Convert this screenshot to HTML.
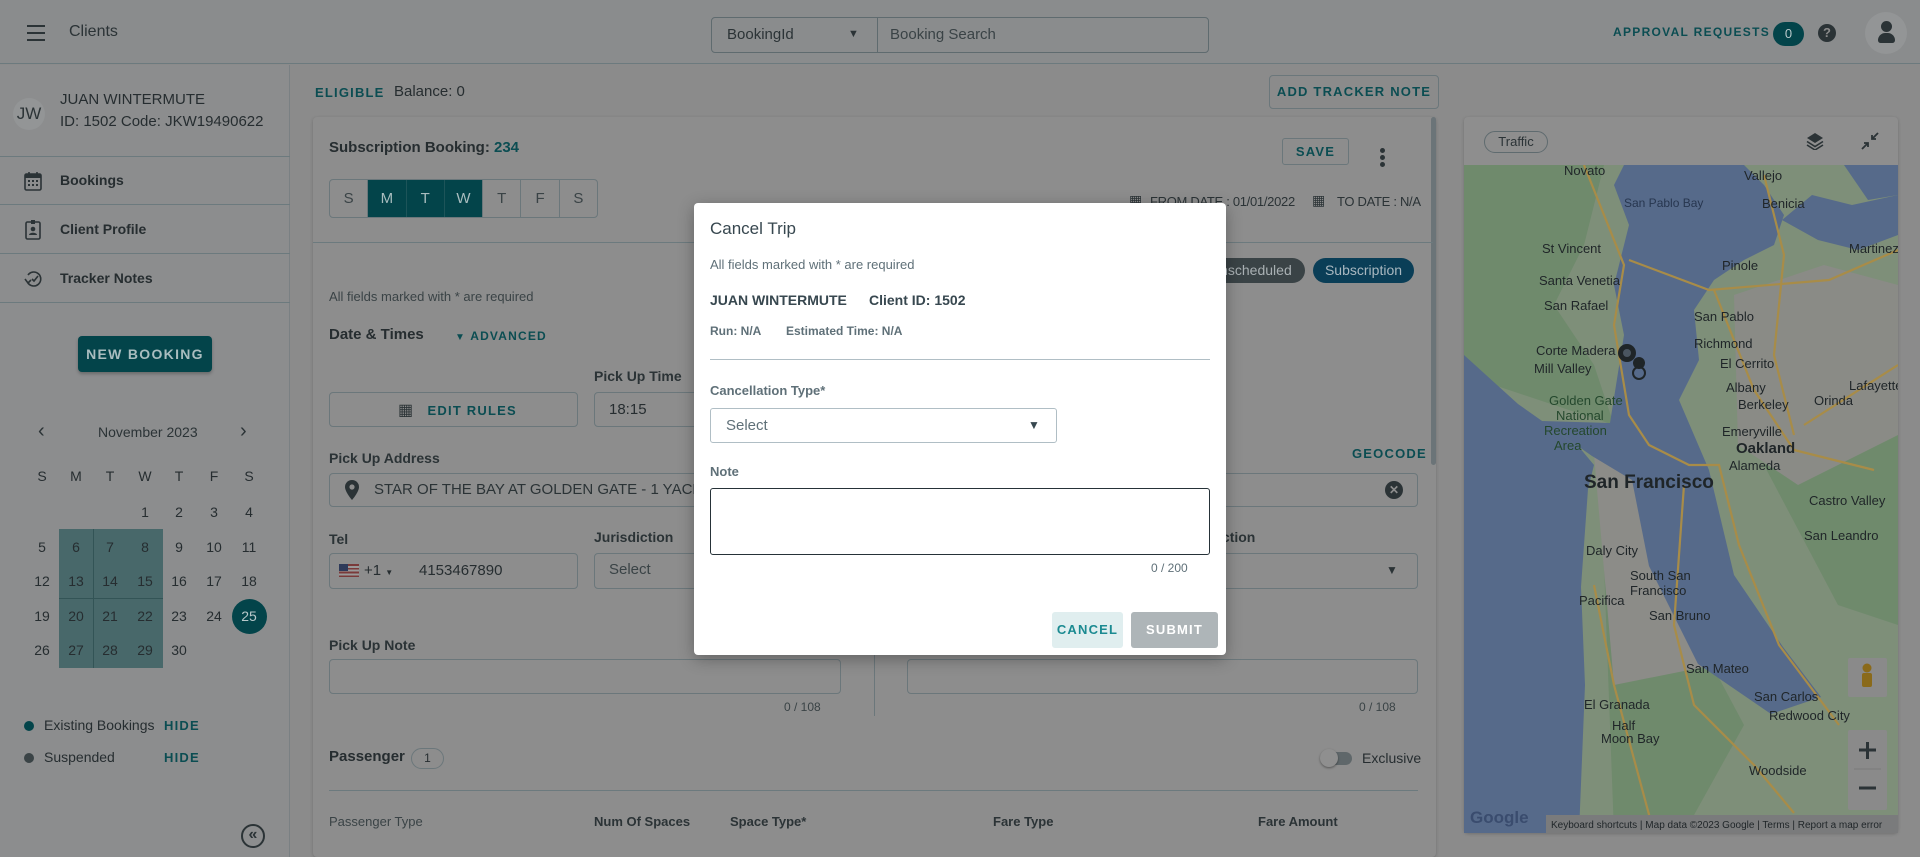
<!DOCTYPE html>
<html><head><meta charset="utf-8"><style>
*{box-sizing:border-box;margin:0;padding:0}
body{width:1920px;height:857px;overflow:hidden;background:#8b8b8b;font-family:"Liberation Sans",sans-serif;color:#262d30;position:relative;font-size:14px}
.a{position:absolute;white-space:nowrap}
.teal{color:#0b4d52;font-weight:bold;letter-spacing:1.2px}
.inp{position:absolute;border:1px solid #6b777b;border-radius:4px}
.lbl{position:absolute;font-weight:bold;color:#2b3336;font-size:14px}
.hl{position:absolute;height:1px;background:#6c7a7e}
.cal span{position:absolute;width:30px;text-align:center;font-size:14px;color:#262d30}
</style></head><body>
<!-- header -->
<div class="a" style="left:0;top:0;width:1920px;height:64px;background:#8a8c8d;border-bottom:1px solid #6c7a7e"></div>
<div class="a" style="left:27px;top:25px;width:18px;height:2px;background:#2b3336;box-shadow:0 7px 0 #2b3336,0 14px 0 #2b3336"></div>
<div class="a" style="left:69px;top:23px;font-size:16px;color:#2b3336">Clients</div>
<div class="inp" style="left:711px;top:17px;width:498px;height:36px;border-color:#5f6b6f"></div>
<div class="a" style="left:877px;top:17px;width:1px;height:36px;background:#5f6b6f"></div>
<div class="a" style="left:727px;top:26px;font-size:15px;color:#2b3336">BookingId</div>
<div class="a" style="left:848px;top:28px;font-size:11px;color:#2b3336">▼</div>
<div class="a" style="left:890px;top:26px;font-size:15px;color:#3a4346">Booking Search</div>
<div class="a teal" style="left:1613px;top:25px;font-size:12px;letter-spacing:1.3px">APPROVAL REQUESTS</div>
<div class="a" style="left:1773px;top:22px;width:31px;height:24px;border-radius:12px;background:#03444a;color:#b8c8ca;font-size:13px;text-align:center;line-height:24px">0</div>
<div class="a" style="left:1818px;top:24px;width:18px;height:18px;border-radius:50%;background:#2b3336;color:#8b8b8b;font-size:13px;font-weight:bold;text-align:center;line-height:18px">?</div>
<div class="a" style="left:1865px;top:12px;width:42px;height:42px;border-radius:50%;background:#939596"></div>
<div class="a" style="left:1881px;top:21px;width:11px;height:11px;border-radius:50%;background:#2b3336"></div>
<div class="a" style="left:1878px;top:33px;width:17px;height:10px;border-radius:8px 8px 3px 3px;background:#2b3336"></div>
<!-- sidebar -->
<div class="a" style="left:0;top:65px;width:290px;height:792px;background:#8c8d8e;border-right:1px solid #7a8083"></div>
<div class="a" style="left:13px;top:98px;width:32px;height:32px;border-radius:50%;background:#939596;font-size:17px;line-height:32px;text-align:center;color:#2b3336">JW</div>
<div class="a" style="left:60px;top:91px;font-size:15px">JUAN WINTERMUTE</div>
<div class="a" style="left:60px;top:113px;font-size:15px">ID: 1502 Code: JKW19490622</div>
<div class="hl" style="left:0;top:156px;width:290px"></div>
<div class="hl" style="left:0;top:204px;width:290px"></div>
<div class="hl" style="left:0;top:253px;width:290px"></div>
<div class="hl" style="left:0;top:302px;width:290px"></div>
<svg class="a" style="left:24px;top:171px" width="18" height="20" viewBox="0 0 18 20"><rect x="1" y="3" width="16" height="16" rx="1.5" fill="none" stroke="#2b3336" stroke-width="1.6"/><rect x="1" y="3" width="16" height="4" fill="#2b3336"/><path d="M5 1v4M13 1v4" stroke="#2b3336" stroke-width="1.6"/><g fill="#2b3336"><rect x="4" y="9" width="2" height="2"/><rect x="8" y="9" width="2" height="2"/><rect x="12" y="9" width="2" height="2"/><rect x="4" y="13" width="2" height="2"/><rect x="8" y="13" width="2" height="2"/><rect x="12" y="13" width="2" height="2"/></g></svg>
<div class="a" style="left:60px;top:172px;font-size:14px;font-weight:bold">Bookings</div>
<svg class="a" style="left:25px;top:219px" width="16" height="21" viewBox="0 0 16 21"><rect x="1" y="3" width="14" height="17" rx="1.5" fill="none" stroke="#2b3336" stroke-width="1.6"/><rect x="6" y="1" width="4" height="4" fill="#2b3336"/><circle cx="8" cy="10" r="2.3" fill="#2b3336"/><path d="M4 16c0-3 8-3 8 0" fill="#2b3336"/></svg>
<div class="a" style="left:60px;top:221px;font-size:14px;font-weight:bold">Client Profile</div>
<svg class="a" style="left:24px;top:269px" width="20" height="20" viewBox="0 0 20 20"><path d="M4 14A7 7 0 1 0 4 6" fill="none" stroke="#2b3336" stroke-width="1.6"/><path d="M1 10l3 4 3-3" fill="none" stroke="#2b3336" stroke-width="1.6"/><path d="M8 10l2 2 4-5" fill="none" stroke="#2b3336" stroke-width="1.6"/></svg>
<div class="a" style="left:60px;top:270px;font-size:14px;font-weight:bold">Tracker Notes</div>
<div class="a" style="left:78px;top:336px;width:134px;height:36px;border-radius:4px;background:#03444a;color:#a9bdbf;font-weight:bold;font-size:14px;letter-spacing:1.3px;text-align:center;line-height:36px;box-shadow:0 2px 3px rgba(0,0,0,.25)">NEW BOOKING</div>
<div class="a" style="left:38px;top:420px;font-size:20px;color:#2b3336">‹</div>
<div class="a" style="left:240px;top:420px;font-size:20px;color:#2b3336">›</div>
<div class="a" style="left:98px;top:424px;font-size:14px;color:#2b3336">November 2023</div>
<div class="a" style="left:59px;top:529px;width:104px;height:139px;background:#48686a"></div>
<div class="a" style="left:93px;top:529px;width:1px;height:139px;background:#335456"></div>
<div class="a" style="left:59px;top:598px;width:104px;height:1px;background:#335456"></div>
<div class="a" style="left:232px;top:599px;width:35px;height:35px;border-radius:50%;background:#03444a"></div>
<div class="cal">
<span style="left:27px;top:468px">S</span><span style="left:61px;top:468px">M</span><span style="left:95px;top:468px">T</span><span style="left:130px;top:468px">W</span><span style="left:164px;top:468px">T</span><span style="left:199px;top:468px">F</span><span style="left:234px;top:468px">S</span>
<span style="left:130px;top:504px">1</span><span style="left:164px;top:504px">2</span><span style="left:199px;top:504px">3</span><span style="left:234px;top:504px">4</span>
<span style="left:27px;top:539px">5</span><span style="left:61px;top:539px">6</span><span style="left:95px;top:539px">7</span><span style="left:130px;top:539px">8</span><span style="left:164px;top:539px">9</span><span style="left:199px;top:539px">10</span><span style="left:234px;top:539px">11</span>
<span style="left:27px;top:573px">12</span><span style="left:61px;top:573px">13</span><span style="left:95px;top:573px">14</span><span style="left:130px;top:573px">15</span><span style="left:164px;top:573px">16</span><span style="left:199px;top:573px">17</span><span style="left:234px;top:573px">18</span>
<span style="left:27px;top:608px">19</span><span style="left:61px;top:608px">20</span><span style="left:95px;top:608px">21</span><span style="left:130px;top:608px">22</span><span style="left:164px;top:608px">23</span><span style="left:199px;top:608px">24</span><span style="left:234px;top:608px;color:#b8c8ca">25</span>
<span style="left:27px;top:642px">26</span><span style="left:61px;top:642px">27</span><span style="left:95px;top:642px">28</span><span style="left:130px;top:642px">29</span><span style="left:164px;top:642px">30</span>
</div>
<div class="a" style="left:24px;top:721px;width:10px;height:10px;border-radius:50%;background:#03444a"></div>
<div class="a" style="left:44px;top:717px;font-size:14px">Existing Bookings</div>
<div class="a teal" style="left:164px;top:718px;font-size:13px">HIDE</div>
<div class="a" style="left:24px;top:753px;width:10px;height:10px;border-radius:50%;background:#3a4346"></div>
<div class="a" style="left:44px;top:749px;font-size:14px">Suspended</div>
<div class="a teal" style="left:164px;top:750px;font-size:13px">HIDE</div>
<div class="a" style="left:241px;top:824px;width:24px;height:24px;border-radius:50%;border:2px solid #2b3336;font-size:16px;line-height:18px;text-align:center;color:#2b3336;font-weight:bold">«</div>
<!-- main -->
<div class="a teal" style="left:315px;top:85px;font-size:13px">ELIGIBLE</div>
<div class="a" style="left:394px;top:83px;font-size:15px">Balance: 0</div>
<div class="a teal" style="left:1269px;top:75px;width:170px;height:34px;border:1px solid #6b777b;border-radius:4px;font-size:13px;text-align:center;line-height:32px">ADD TRACKER NOTE</div>
<div class="a" style="left:313px;top:117px;width:1123px;height:740px;background:#8d8d8d;border-radius:4px;box-shadow:0 1px 3px rgba(0,0,0,.2)"></div>
<div class="a" style="left:1431px;top:117px;width:5px;height:348px;background:#6b7478;border-radius:3px"></div>
<div class="a" style="left:329px;top:139px;font-size:15px;font-weight:bold">Subscription Booking: <span style="color:#0b4d52">234</span></div>
<div class="a" style="left:329px;top:179px;width:269px;height:39px;border:1px solid #6b777b;border-radius:4px;overflow:hidden;display:flex">
<div style="flex:1;text-align:center;line-height:37px;font-size:15px;color:#3a4346;border-right:1px solid #6b777b">S</div>
<div style="flex:1;text-align:center;line-height:37px;font-size:15px;color:#a9bdbf;background:#03444a;border-right:1px solid #1d5459">M</div>
<div style="flex:1;text-align:center;line-height:37px;font-size:15px;color:#a9bdbf;background:#03444a;border-right:1px solid #1d5459">T</div>
<div style="flex:1;text-align:center;line-height:37px;font-size:15px;color:#a9bdbf;background:#03444a;border-right:1px solid #6b777b">W</div>
<div style="flex:1;text-align:center;line-height:37px;font-size:15px;color:#3a4346;border-right:1px solid #6b777b">T</div>
<div style="flex:1;text-align:center;line-height:37px;font-size:15px;color:#3a4346;border-right:1px solid #6b777b">F</div>
<div style="flex:1;text-align:center;line-height:37px;font-size:15px;color:#3a4346">S</div></div>
<div class="a teal" style="left:1282px;top:138px;width:67px;height:27px;border:1px solid #6b777b;border-radius:3px;font-size:13px;text-align:center;line-height:25px">SAVE</div>
<div class="a" style="left:1380px;top:148px;width:5px;height:5px;border-radius:50%;background:#2b3336;box-shadow:0 7px 0 #2b3336,0 14px 0 #2b3336"></div>
<div class="a" style="left:1129px;top:192px;font-size:14px;color:#2b3336">▦</div>
<div class="a" style="left:1150px;top:194px;font-size:13px;color:#2b3336;letter-spacing:-0.3px">FROM DATE : 01/01/2022</div>
<div class="a" style="left:1312px;top:192px;font-size:14px;color:#2b3336">▦</div>
<div class="a" style="left:1337px;top:194px;font-size:13px;color:#2b3336;letter-spacing:-0.3px">TO DATE : N/A</div>
<div class="hl" style="left:313px;top:242px;width:1120px"></div>
<div class="a" style="left:1200px;top:258px;width:105px;height:25px;border-radius:13px;background:#3a4346;color:#a9b0b3;font-size:14px;line-height:25px;padding-left:10px">Unscheduled</div>
<div class="a" style="left:1313px;top:258px;width:101px;height:25px;border-radius:13px;background:#0a3e57;color:#a9b8c0;font-size:14px;line-height:25px;text-align:center">Subscription</div>
<div class="a" style="left:329px;top:289px;font-size:13px;color:#3a4346">All fields marked with * are required</div>
<div class="a" style="left:329px;top:326px;font-size:15px;font-weight:bold">Date &amp; Times</div>
<div class="a teal" style="left:455px;top:329px;font-size:12px"><span style="font-size:10px">▼</span> ADVANCED</div>
<div class="lbl" style="left:594px;top:368px">Pick Up Time</div>
<div class="inp" style="left:329px;top:392px;width:249px;height:35px"></div>
<div class="a teal" style="left:398px;top:400px;font-size:13px"><span style="font-size:16px;letter-spacing:0;font-weight:normal;color:#2b3336">▦</span>&nbsp;&nbsp; EDIT RULES</div>
<div class="inp" style="left:594px;top:392px;width:140px;height:35px"></div>
<div class="a" style="left:609px;top:401px;font-size:15px">18:15</div>
<div class="lbl" style="left:329px;top:450px">Pick Up Address</div>
<div class="a teal" style="left:1352px;top:446px;font-size:13px">GEOCODE</div>
<div class="inp" style="left:329px;top:473px;width:1089px;height:34px"></div>
<svg class="a" style="left:345px;top:480px" width="14" height="20" viewBox="0 0 14 20"><path d="M7 0a7 7 0 0 0-7 7c0 5 7 13 7 13s7-8 7-13a7 7 0 0 0-7-7z" fill="#2b3336"/><circle cx="7" cy="7" r="2.6" fill="#8d8d8d"/></svg>
<div class="a" style="left:374px;top:481px;font-size:15px;color:#2b3336">STAR OF THE BAY AT GOLDEN GATE - 1 YACHT RD</div>
<div class="a" style="left:1385px;top:481px;width:18px;height:18px;border-radius:50%;background:#2b3336;color:#8d8d8d;font-size:12px;line-height:18px;text-align:center;font-weight:bold">✕</div>
<div class="lbl" style="left:329px;top:531px">Tel</div>
<div class="lbl" style="left:594px;top:529px">Jurisdiction</div>
<div class="lbl" style="left:1176px;top:529px">Jurisdiction</div>
<div class="inp" style="left:329px;top:553px;width:249px;height:36px"></div>
<div class="a" style="left:339px;top:564px;width:20px;height:13px;background:repeating-linear-gradient(#7a3a3a 0 1.9px,#999 1.9px 3.8px)"></div>
<div class="a" style="left:339px;top:564px;width:9px;height:7px;background:#2e3a5a"></div>
<div class="a" style="left:364px;top:562px;font-size:15px">+1 <span style="font-size:8px">▼</span></div>
<div class="a" style="left:419px;top:562px;font-size:15px">4153467890</div>
<div class="inp" style="left:594px;top:553px;width:150px;height:36px"></div>
<div class="a" style="left:609px;top:561px;font-size:15px;color:#3a4346">Select</div>
<div class="inp" style="left:1200px;top:553px;width:218px;height:36px"></div>
<div class="a" style="left:1208px;top:561px;font-size:15px;color:#3a4346">t</div>
<div class="a" style="left:1386px;top:563px;font-size:12px;color:#2b3336">▼</div>
<div class="lbl" style="left:329px;top:637px">Pick Up Note</div>
<div class="inp" style="left:329px;top:659px;width:512px;height:35px"></div>
<div class="a" style="left:874px;top:655px;width:1px;height:61px;background:#6b777b"></div>
<div class="inp" style="left:907px;top:659px;width:511px;height:35px"></div>
<div class="a" style="left:784px;top:700px;font-size:12px;color:#3a4346">0 / 108</div>
<div class="a" style="left:1359px;top:700px;font-size:12px;color:#3a4346">0 / 108</div>
<div class="a" style="left:329px;top:748px;font-size:15px;font-weight:bold">Passenger</div>
<div class="a" style="left:411px;top:748px;width:33px;height:21px;border:1px solid #6b777b;border-radius:11px;font-size:12px;text-align:center;line-height:19px">1</div>
<div class="a" style="left:1322px;top:752px;width:30px;height:13px;border-radius:7px;background:#5f676a"></div>
<div class="a" style="left:1320px;top:749px;width:18px;height:18px;border-radius:50%;background:#8f8f8f;box-shadow:0 1px 2px rgba(0,0,0,.4)"></div>
<div class="a" style="left:1362px;top:750px;font-size:14px">Exclusive</div>
<div class="hl" style="left:329px;top:790px;width:1089px"></div>
<div class="a" style="left:329px;top:814px;font-size:13px;color:#3a4346">Passenger Type</div>
<div class="a" style="left:594px;top:814px;font-size:13px;font-weight:bold;color:#2b3336">Num Of Spaces</div>
<div class="a" style="left:730px;top:814px;font-size:13px;font-weight:bold;color:#2b3336">Space Type*</div>
<div class="a" style="left:993px;top:814px;font-size:13px;font-weight:bold;color:#2b3336">Fare Type</div>
<div class="a" style="left:1258px;top:814px;font-size:13px;font-weight:bold;color:#2b3336">Fare Amount</div>
<!-- map card -->
<div class="a" style="left:1464px;top:117px;width:434px;height:716px;background:#8e8e8e;border-radius:4px;box-shadow:0 1px 3px rgba(0,0,0,.2)"></div>
<div class="a" style="left:1484px;top:131px;width:64px;height:22px;border:1px solid #5f6b6f;border-radius:11px;font-size:13px;text-align:center;line-height:20px;color:#2b3336">Traffic</div>
<svg class="a" style="left:1806px;top:132px" width="18" height="18" viewBox="0 0 18 18"><path d="M9 1L1 6l8 5 8-5z" fill="#2b3336"/><path d="M1 9.5l8 5 8-5M1 13l8 5 8-5" fill="none" stroke="#2b3336" stroke-width="1.6"/></svg>
<svg class="a" style="left:1861px;top:132px" width="18" height="18" viewBox="0 0 18 18"><path d="M17 1l-6 6M11 3v4h4M1 17l6-6M7 15v-4H3" fill="none" stroke="#2b3336" stroke-width="1.8"/></svg>
<svg class="a" style="left:1464px;top:165px" width="434" height="668" viewBox="0 0 434 668" font-family="Liberation Sans,sans-serif">
<rect width="434" height="668" fill="#7e8f79"/>
<path d="M0 0h140l-20 80-30 60 40 60 20 60-120-40L0 190z" fill="#6f8a6c"/>
<path d="M300 300l134-40v200l-60-20z" fill="#6f8a6c"/>
<path d="M140 400l60 10 80 150-60 108H150z" fill="#6f8a6c"/>
<path d="M270 130l90-30 74 20v150l-100 50-60-40z" fill="#8a8b86"/>
<path d="M130 290l90 10 30 200-100 20z" fill="#8c8c88"/>
<path d="M0 190L54 239 115 282 130 300 124 324 117 422 121 520 115 668H0z" fill="#566a8a"/>
<path d="M146 258L160 170 150 120 165 60 150 20 160 0h120l20 20 20 30-10 30-30 15-30 20-20 30 5 50-20 40 30 70 25 105 49 72 38 50-50 17-73-50-49-98-17-86-40-24-50-35z" fill="#566a8a"/>
<path d="M318 55l30-25 40 10 46-10v40l-40 15-40-10z" fill="#566a8a"/>
<path d="M380 0h54v30l-30 5z" fill="#566a8a"/>
<g fill="none" stroke="#a88c48" stroke-width="2.2">
<path d="M120 0l40 100-10 60 15 90 20 30 40 20 30 0 20 80 40 100 60 80"/>
<path d="M165 95l80 30 120-10 69-30"/>
<path d="M250 125l40 100 40 60 80 20"/>
<path d="M300 10l20 80-10 100 20 80"/>
<path d="M340 260l94-60"/>
<path d="M220 320l-10 140 20 80 60 60 40 48"/>
<path d="M130 420l20 100 40 148"/>
</g>
<g fill="#1f2528" font-size="13">
<text x="100" y="10">Novato</text><text x="280" y="15">Vallejo</text>
<text x="160" y="42" fill="#27364f" font-size="12">San Pablo Bay</text>
<text x="298" y="43">Benicia</text><text x="385" y="88">Martinez</text>
<text x="78" y="88">St Vincent</text><text x="75" y="120">Santa Venetia</text>
<text x="258" y="105">Pinole</text><text x="80" y="145">San Rafael</text>
<text x="230" y="156">San Pablo</text><text x="230" y="183">Richmond</text>
<text x="72" y="190">Corte Madera</text><text x="256" y="203">El Cerrito</text>
<text x="70" y="208">Mill Valley</text><text x="262" y="227">Albany</text>
<text x="274" y="244">Berkeley</text><text x="350" y="240">Orinda</text><text x="385" y="225">Lafayette</text>
<text x="258" y="271">Emeryville</text>
<text x="85" y="240" fill="#24482d">Golden Gate</text><text x="92" y="255" fill="#24482d">National</text><text x="80" y="270" fill="#24482d">Recreation</text><text x="90" y="285" fill="#24482d">Area</text>
<text x="120" y="323" font-size="19" font-weight="bold">San Francisco</text>
<text x="272" y="288" font-size="15" font-weight="bold">Oakland</text>
<text x="265" y="305">Alameda</text><text x="345" y="340">Castro Valley</text>
<text x="340" y="375">San Leandro</text>
<text x="122" y="390">Daly City</text><text x="166" y="415">South San</text><text x="166" y="430">Francisco</text>
<text x="115" y="440">Pacifica</text><text x="185" y="455">San Bruno</text>
<text x="222" y="508">San Mateo</text><text x="290" y="536">San Carlos</text>
<text x="120" y="544">El Granada</text><text x="305" y="555">Redwood City</text>
<text x="148" y="565">Half</text><text x="137" y="578">Moon Bay</text><text x="285" y="610">Woodside</text>
</g>
<circle cx="163" cy="188" r="9" fill="#1f2528"/><circle cx="163" cy="188" r="4" fill="#4a5560"/>
<circle cx="175" cy="198" r="6" fill="#1f2528"/><circle cx="175" cy="208" r="6" fill="none" stroke="#1f2528" stroke-width="2"/>
<text x="6" y="658" font-size="17" font-weight="bold" fill="#3a4c6e">Google</text>
<rect x="82" y="650" width="352" height="18" fill="#7a7b7c"/>
<text x="87" y="663" font-size="10" fill="#1f2528">Keyboard shortcuts | Map data ©2023 Google | Terms | Report a map error</text>
<rect x="384" y="493" width="39" height="39" rx="2" fill="#8a8a8a"/>
<circle cx="403" cy="503" r="4.5" fill="#8a6a1a"/><rect x="398" y="508" width="10" height="14" rx="2" fill="#8a6a1a"/>
<rect x="384" y="565" width="39" height="80" rx="2" fill="#8a8a8a"/>
<path d="M395 585h17M403.5 577v17M395 623h17" stroke="#2b3336" stroke-width="3"/>
<path d="M390 604h27" stroke="#7a7a7a" stroke-width="1"/>
</svg>
<!-- modal -->
<div class="a" style="left:694px;top:203px;width:532px;height:452px;background:#fff;border-radius:4px;box-shadow:0 4px 16px rgba(0,0,0,.3)"></div>
<div class="a" style="left:710px;top:219px;font-size:17px;color:#37474f">Cancel Trip</div>
<div class="a" style="left:710px;top:257px;font-size:13px;color:#5f7078">All fields marked with * are required</div>
<div class="a" style="left:710px;top:292px;font-size:14px;font-weight:bold;color:#37474f">JUAN WINTERMUTE</div>
<div class="a" style="left:869px;top:292px;font-size:14px;font-weight:bold;color:#37474f">Client ID: 1502</div>
<div class="a" style="left:710px;top:324px;font-size:12px;font-weight:bold;color:#5f7078">Run: N/A</div>
<div class="a" style="left:786px;top:324px;font-size:12px;font-weight:bold;color:#5f7078">Estimated Time: N/A</div>
<div class="a" style="left:710px;top:359px;width:500px;height:1px;background:#b0bec5"></div>
<div class="a" style="left:710px;top:383px;font-size:13px;font-weight:bold;color:#5f7078">Cancellation Type*</div>
<div class="a" style="left:710px;top:408px;width:347px;height:35px;border:1px solid #b0bec5;border-radius:3px"></div>
<div class="a" style="left:726px;top:417px;font-size:15px;color:#5f7078">Select</div>
<div class="a" style="left:1028px;top:418px;font-size:12px;color:#37474f">▼</div>
<div class="a" style="left:710px;top:464px;font-size:13px;font-weight:bold;color:#5f7078">Note</div>
<div class="a" style="left:710px;top:488px;width:500px;height:67px;border:1.5px solid #263238;border-radius:3px"></div>
<div class="a" style="left:1151px;top:561px;font-size:12px;color:#5f7078">0 / 200</div>
<div class="a" style="left:1052px;top:612px;width:71px;height:36px;border-radius:3px;background:#e0eeef;color:#1b8a91;font-size:13px;font-weight:bold;letter-spacing:1.2px;text-align:center;line-height:36px">CANCEL</div>
<div class="a" style="left:1131px;top:612px;width:87px;height:36px;border-radius:3px;background:#aeb5b8;color:#fff;font-size:13px;font-weight:bold;letter-spacing:1.2px;text-align:center;line-height:36px">SUBMIT</div>
</body></html>
